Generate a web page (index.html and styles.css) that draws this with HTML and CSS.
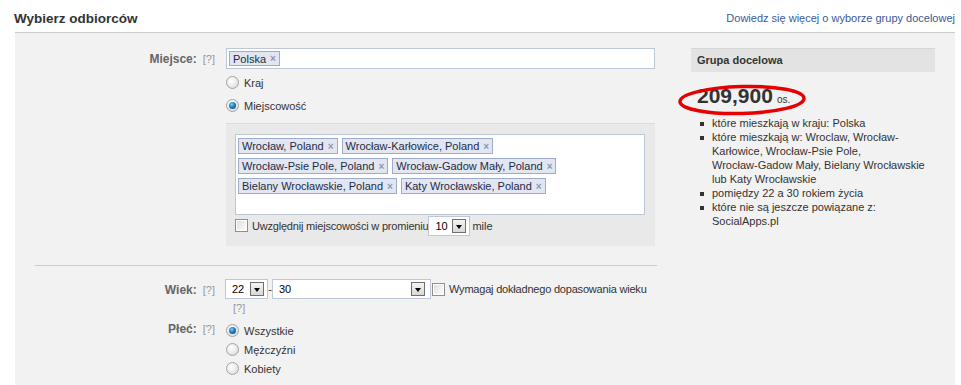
FILE: index.html
```html
<!DOCTYPE html>
<html lang="pl">
<head>
<meta charset="utf-8">
<title>Wybierz odbiorców</title>
<link rel="stylesheet" href="styles.css">
</head>
<body>
<header class="top">
  <h1 class="title">Wybierz odbiorców</h1>
  <a class="learn" href="#">Dowiedz się więcej o wyborze grupy docelowej</a>
</header>
<div class="panel">
  <div class="form">
    <div class="row">
      <div class="label"><b>Miejsce:</b><span class="help">[?]</span></div>
      <div class="field">
        <div class="tokenbox single"><span class="token">Polska<i class="x">×</i></span></div>
        <div class="opt first"><span class="radio"></span>Kraj</div>
        <div class="opt"><span class="radio on"></span>Miejscowość</div>
        <div class="subpanel">
          <div class="tokenbox multi">
            <span class="token">Wrocław, Poland<i class="x">×</i></span>
            <span class="token">Wrocław-Karłowice, Poland<i class="x">×</i></span>
            <span class="token">Wrocław-Psie Pole, Poland<i class="x">×</i></span>
            <span class="token">Wrocław-Gadow Mały, Poland<i class="x">×</i></span>
            <span class="token">Bielany Wrocławskie, Poland<i class="x">×</i></span>
            <span class="token">Katy Wrocławskie, Poland<i class="x">×</i></span>
          </div>
          <div class="radius">
            <span class="check"></span><span class="cap">Uwzględnij miejscowości w promieniu</span>
            <span class="select s10"><span class="val">10</span><span class="btn"></span></span><span class="cap2">mile</span>
          </div>
        </div>
      </div>
    </div>
    <div class="sep"></div>
    <div class="row age">
      <div class="label"><b>Wiek:</b><span class="help">[?]</span></div>
      <div class="field">
        <div class="agebar">
          <span class="select s22"><span class="val">22</span><span class="btn"></span></span>
          <span class="dash">-</span>
          <span class="select s30"><span class="val">30</span><span class="btn"></span></span>
          <span class="check"></span><span class="cap">Wymagaj dokładnego dopasowania wieku</span>
        </div>
        <div class="help under">[?]</div>
      </div>
    </div>
    <div class="row gender">
      <div class="label"><b>Płeć:</b><span class="help">[?]</span></div>
      <div class="field">
        <div class="opt small"><span class="radio on"></span>Wszystkie</div>
        <div class="opt small"><span class="radio"></span>Mężczyźni</div>
        <div class="opt small"><span class="radio"></span>Kobiety</div>
      </div>
    </div>
  </div>
  <aside class="audience">
    <div class="aud-head">Grupa docelowa</div>
    <div class="count"><span class="num">209,900</span><span class="unit">os.</span>
      <svg class="circle" width="134" height="38" viewBox="0 0 134 38" aria-hidden="true">
        <ellipse cx="67" cy="19" rx="62" ry="13.5" fill="none" stroke="#e60000" stroke-width="3.5" transform="rotate(-1.5 67 19)"/>
      </svg>
    </div>
    <ul class="facts">
      <li>które mieszkają w kraju: Polska</li>
      <li>które mieszkają w: Wroclaw, Wrocław-Karłowice, Wrocław-Psie Pole, Wrocław-&#8288;Gadow Mały, Bielany Wrocławskie lub Katy Wrocławskie</li>
      <li>pomiędzy 22 a 30 rokiem życia</li>
      <li>które nie są jeszcze powiązane z: SocialApps.pl</li>
    </ul>
  </aside>
</div>
</body>
</html>
```
FILE: styles.css
```css
* { box-sizing: border-box; }
html, body { margin: 0; padding: 0; background: #fff; }
body {
  font-family: "Liberation Sans", Arial, sans-serif;
  font-size: 11px;
  color: #333;
  width: 961px;
  height: 385px;
  overflow: hidden;
}
.top {
  height: 32px;
  display: flex;
  justify-content: space-between;
  align-items: center;
  padding: 0 6px 0 14px;
}
.title {
  margin: 0;
  font-size: 13.5px;
  font-weight: bold;
  color: #333;
  padding-top: 4px;
}
.learn {
  color: #3b5998;
  text-decoration: none;
  font-size: 11px;
  padding-top: 3px;
}
.panel {
  margin: 0 6px 0 15px;
  background: #f2f2f2;
  border-top: 1px solid #cccccc;
  height: 360px;
  display: flex;
  padding-top: 15px;
}
.form { width: 642px; }
.row {
  display: grid;
  grid-template-columns: 200px 432px;
  column-gap: 11px;
}
.label {
  text-align: right;
  color: #666;
  padding-top: 4px;
  white-space: nowrap;
}
.label b { font-weight: bold; font-size: 12px; }
.help { color: #999; margin-left: 6px; }
.field { width: 429px; }
.tokenbox {
  background: #fff;
  border: 1px solid #bdc7d8;
}
.tokenbox.single { height: 21px; padding: 2px 2px; }
.token {
  display: inline-flex;
  align-items: center;
  height: 16px;
  padding: 0 3px 0 3px;
  border: 1px solid #9daccc;
  background: #e2e6f0;
  color: #1c2a47;
  white-space: nowrap;
  vertical-align: top;
}
.token .x {
  font-style: normal;
  color: #8b97b3;
  font-weight: bold;
  font-size: 10px;
  margin-left: 4px;
}
.tokenbox.single .token { height: 15px; }
.opt {
  display: flex;
  align-items: center;
  height: 23px;
}
.opt.first { margin-top: 2px; }
.opt.small { height: 19px; }
.radio {
  width: 13px;
  height: 13px;
  border-radius: 50%;
  border: 1px solid #a3a3a3;
  background: radial-gradient(circle at 40% 35%, #ffffff 0%, #f0f0f0 40%, #d2d2d2 100%);
  margin-right: 5px;
  flex: none;
  position: relative;
}
.radio.on::after {
  content: "";
  position: absolute;
  left: 2px;
  top: 2px;
  width: 7px;
  height: 7px;
  border-radius: 50%;
  background: radial-gradient(circle at 40% 35%, #7fd0f5 0%, #1a7fc0 45%, #0a3a66 100%);
}
.subpanel {
  margin-top: 6px;
  background: #e9e9e9;
  border-top: 1px solid #dcdcdc;
  padding: 10px 10px 10px 9px;
}
.tokenbox.multi {
  height: 81px;
  padding: 3px 2px 0 2px;
  display: flex;
  flex-wrap: wrap;
  align-content: flex-start;
  column-gap: 4px;
  row-gap: 4px;
  width: 410px;
}
.radius {
  display: flex;
  align-items: center;
  height: 21px;
}
.cap { letter-spacing: -0.2px; }
.check {
  width: 13px;
  height: 13px;
  border: 1px solid #8e8f8f;
  background: linear-gradient(135deg, #dcdcdc 0%, #f6f6f6 70%, #ffffff 100%);
  box-shadow: inset 0 0 0 1px #fff;
  flex: none;
  margin-right: 4px;
}
.select {
  display: inline-flex;
  align-items: center;
  justify-content: space-between;
  height: 20px;
  background: #fff;
  border: 1px solid #bdc7d8;
  padding: 0 3px 0 6px;
  color: #000;
  flex: none;
}
.select .btn {
  width: 14px;
  height: 14px;
  border: 1px solid #6f6f6f;
  background: linear-gradient(#f4f4f4, #d8d8d8);
  position: relative;
}
.select .btn::after {
  content: "";
  position: absolute;
  left: 3px;
  top: 5px;
  border-left: 3.5px solid transparent;
  border-right: 3.5px solid transparent;
  border-top: 4px solid #000;
}
.s10 { width: 42px; margin: 0 2px 0 0; }
.s22 { width: 43px; margin-left: -1px; }
.s30 { width: 159px; padding-right: 5px; }
.dash { width: 4px; text-align: center; }
.sep {
  height: 1px;
  background: #cccccc;
  margin: 19px 0 13px 20px;
  width: 622px;
}
.agebar {
  display: flex;
  align-items: center;
  height: 20px;
}
.agebar .check { margin-left: 1px; margin-right: 4px; }
.help.under {
  margin-left: 7px;
  height: 14px;
  line-height: 14px;
  margin-top: 2px;
}
.gender { margin-top: 6px; }
.gender .label { padding-top: 1px; }
.audience {
  width: 244px;
  margin-left: 34px;
}
.aud-head {
  height: 24px;
  background: #e3e3e3;
  border-top: 1px solid #d6d6d6;
  font-weight: bold;
  padding-left: 6px;
  line-height: 22px;
}
.count {
  position: relative;
  margin-top: 12px;
  height: 24px;
  line-height: 24px;
  padding-left: 6px;
  white-space: nowrap;
}
.num {
  font-size: 21px;
  font-weight: bold;
  color: #333;
}
.unit {
  font-size: 10px;
  margin-left: 4px;
}
.circle {
  position: absolute;
  left: -16px;
  top: -3px;
}
.facts {
  list-style: none;
  margin: 8px 0 0 0;
  padding: 0 10px 0 21px;
  line-height: 14px;
}
.facts li { position: relative; }
.facts li::before {
  content: "";
  position: absolute;
  left: -12px;
  top: 6px;
  width: 4px;
  height: 4px;
  background: #333;
}
```
